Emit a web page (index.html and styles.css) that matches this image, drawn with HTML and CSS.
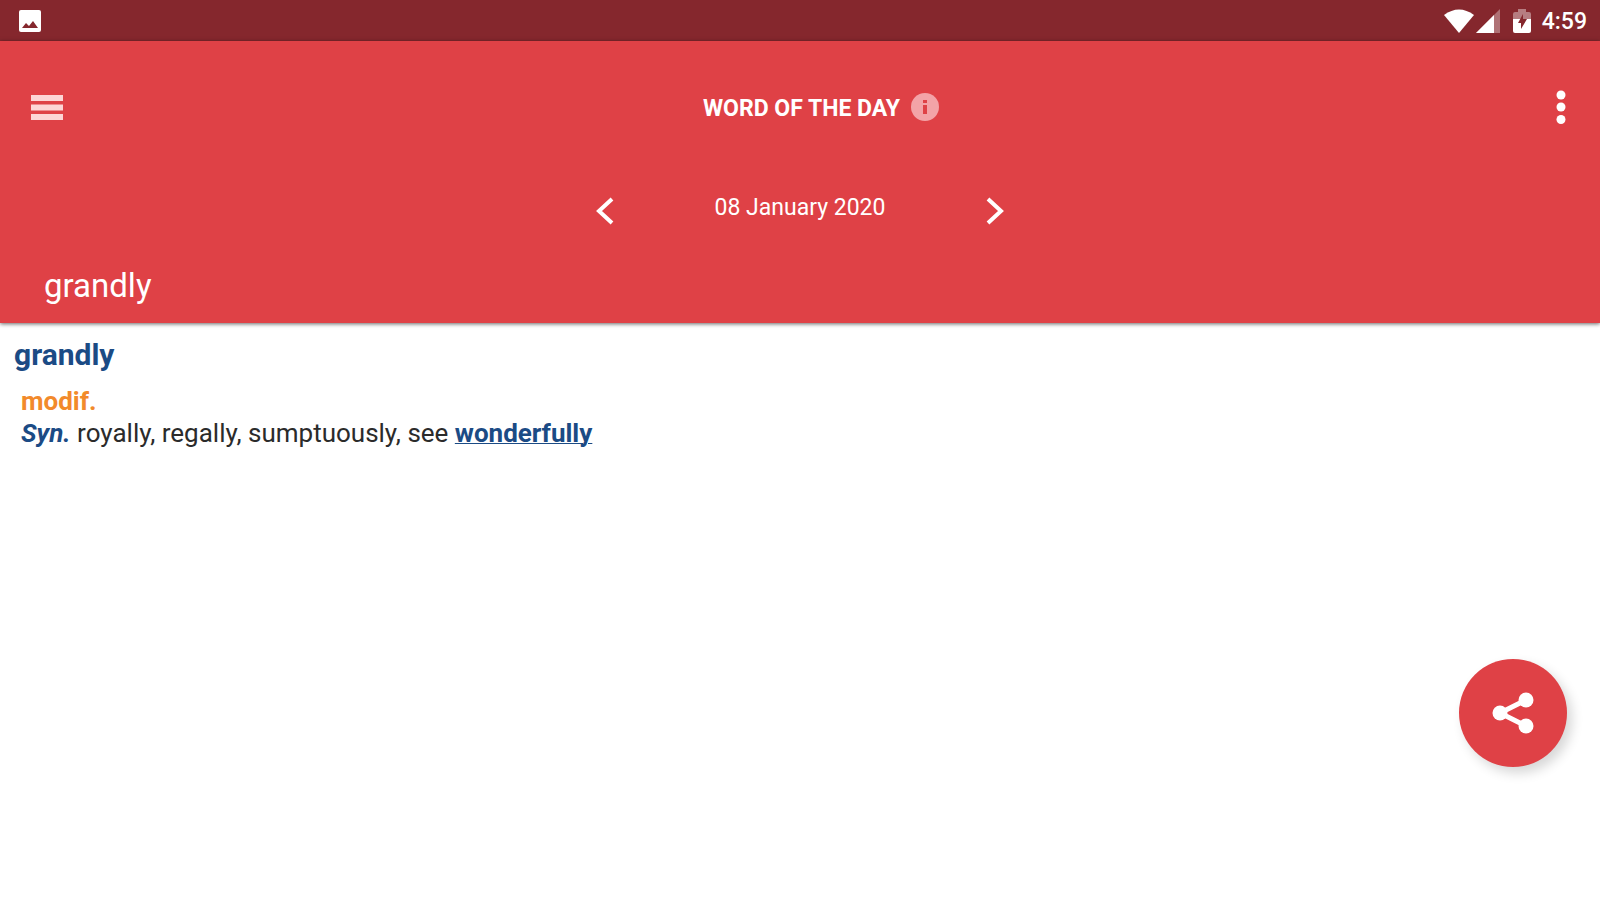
FILE: index.html
```html
<!DOCTYPE html>
<html lang="en">
<head>
<meta charset="utf-8">
<meta name="viewport" content="width=device-width, initial-scale=1">
<title>Word of the day</title>
<link rel="stylesheet" href="styles.css">
</head>
<body>
<div class="status">
  <svg class="status-image" width="22" height="22" viewBox="0 0 22 22" aria-hidden="true">
    <rect width="22" height="22" rx="2" fill="#fff"/>
    <path d="M3 18l4-5 3 3 4-5 5 7z" fill="#85272d"/>
  </svg>
  <div class="status-right">
    <svg width="30" height="24" viewBox="0 0 30 24" aria-hidden="true"><path d="M0 6Q15-5 30 6L15 24z" fill="#fff"/></svg>
    <svg class="signal" width="24" height="24" viewBox="0 0 24 24" aria-hidden="true"><path d="M24 0v24H0z" fill="#fff" fill-opacity=".35"/><path d="M18 6v18H0z" fill="#fff"/></svg>
    <svg class="battery" width="18" height="24" viewBox="0 0 18 24" aria-hidden="true">
      <path d="M5 3V0h8v3h3q2 0 2 2v6H0V5q0-2 2-2z" fill="#fff" fill-opacity=".4"/>
      <path d="M0 10h18v12q0 2-2 2H2q-2 0-2-2z" fill="#fff"/>
      <path d="M10 5L5 14h3v6l6-10h-4z" fill="#85272d"/>
    </svg>
    <span class="clock">4:59</span>
  </div>
</div>
<header class="header">
  <div class="toolbar">
    <button class="icon-button menu" type="button" aria-label="Menu">
      <svg width="32" height="25" viewBox="0 0 32 25"><path d="M0 0h32v6H0zM0 9.500h32v6H0zM0 19h32v6H0z" fill="#fdd5d5"/></svg>
    </button>
    <h1 class="title">WORD OF THE DAY</h1>
    <div class="actions">
      <button class="icon-button" type="button" aria-label="Information">
        <svg width="28" height="28" viewBox="0 0 28 28"><circle cx="14" cy="14" r="14" fill="#f3a3a7"/><path d="M12 12h4v9h-4zM12 7h4v3h-4z" fill="#df4146"/></svg>
      </button>
      <button class="icon-button" type="button" aria-label="More options">
        <svg width="10" height="34" viewBox="0 0 10 34"><g fill="#fff"><circle cx="5" cy="5" r="4.500"/><circle cx="5" cy="17" r="4.500"/><circle cx="5" cy="29.500" r="4.500"/></g></svg>
      </button>
    </div>
  </div>
  <div class="date-row">
    <button class="icon-button chevron" type="button" aria-label="Previous day">
      <svg width="18" height="28" viewBox="0 0 18 28"><path d="M16 2L3 14l13 12" fill="none" stroke="#fff" stroke-width="4"/></svg>
    </button>
    <span class="date">08 January 2020</span>
    <button class="icon-button chevron" type="button" aria-label="Next day">
      <svg width="18" height="28" viewBox="0 0 18 28"><path d="M2 2l13 12L2 26" fill="none" stroke="#fff" stroke-width="4"/></svg>
    </button>
  </div>
  <div class="word">grandly</div>
</header>
<main class="entry">
  <h2 class="headword">grandly</h2>
  <div class="definition">
    <p class="part">modif.</p>
    <p class="synonyms"><b class="label">Syn.</b> royally, regally, sumptuously, see <a class="link" href="#wonderfully">wonderfully</a></p>
  </div>
</main>
<button class="fab" type="button" aria-label="Share">
  <svg width="42" height="42" viewBox="0 0 42 42"><path d="M34 8L8 21l26 13" fill="none" stroke="#fff" stroke-width="5"/><g fill="#fff"><circle cx="8" cy="21" r="7.500"/><circle cx="34" cy="8" r="7.500"/><circle cx="34" cy="34" r="7.500"/></g></svg>
</button>
</body>
</html>
```
FILE: styles.css
```css
* { box-sizing: border-box; }
body {
  margin: 0;
  background: #fff;
  color: #2b2b2b;
  font-family: Roboto, "Liberation Sans", sans-serif;
  font-size: 23px;
}
svg { display: block; }
h1, h2, p { margin: 0; }
.status {
  display: flex;
  align-items: center;
  justify-content: space-between;
  height: 41px;
  padding: 0 13px 0 19px;
  background: #85272d;
  color: #fff;
}
.status-right { display: flex; align-items: center; }
.signal { margin-left: 2px; }
.battery { margin-left: 13px; }
.clock { margin-left: 11px; padding-top: 2px; font-weight: 500; line-height: 28px; }
.header {
  position: relative;
  background: #df4146;
  color: #fff;
  box-shadow: 0 1px 4px rgba(0, 0, 0, .6);
}
.icon-button { padding: 0; border: 0; background: none; cursor: pointer; }
.toolbar {
  display: grid;
  grid-template-columns: 1fr auto 1fr;
  align-items: center;
  height: 132px;
  padding: 0 34px 0 31px;
}
.menu { justify-self: start; }
.title { padding: 3px 0 0 6px; font-size: 23px; font-weight: 700; line-height: 32px; }
.actions { display: flex; align-items: center; justify-content: space-between; padding-left: 11px; }
.date-row { display: flex; align-items: center; justify-content: center; padding-top: 18px; }
.chevron { padding-top: 6px; }
.date { width: 372px; text-align: center; line-height: 32px; }
.word { padding: 41px 44px 17px; font-size: 33px; line-height: 40px; }
.entry { padding: 15px 14px; }
.headword { color: #1b4b85; font-size: 30px; font-weight: 700; line-height: 34px; }
.definition { padding: 13px 7px 0; font-size: 26px; line-height: 32px; }
.part { color: #f28a2b; font-weight: 700; }
.label { color: #1b4b85; font-style: italic; }
.link { color: #1b4b85; font-weight: 700; text-decoration-thickness: 1px; }
.fab {
  position: fixed;
  right: 33px;
  bottom: 133px;
  display: grid;
  place-items: center;
  width: 108px;
  height: 108px;
  padding: 0;
  border: 0;
  border-radius: 50%;
  background: #df4146;
  box-shadow: 5px 6px 12px rgba(0, 0, 0, .16);
  cursor: pointer;
}
```
